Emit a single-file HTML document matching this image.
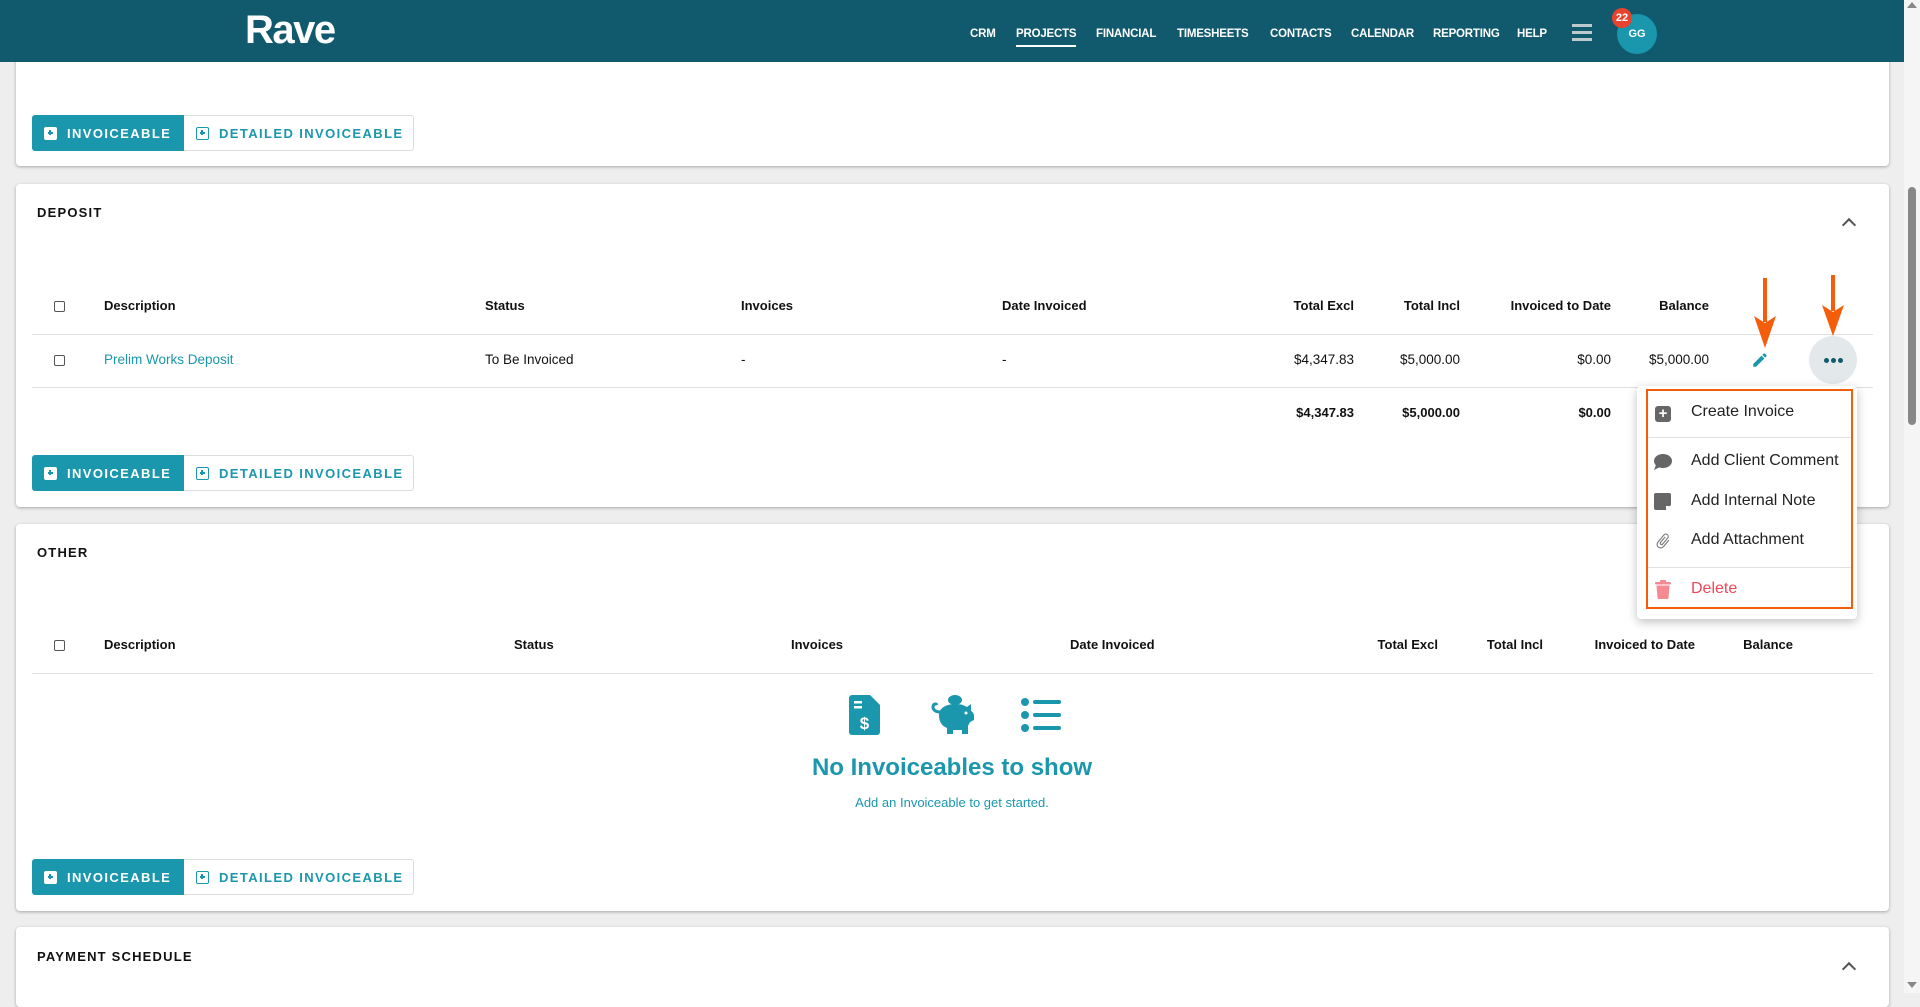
<!DOCTYPE html>
<html><head><meta charset="utf-8"><style>
*{box-sizing:border-box;margin:0;padding:0}
body{width:1920px;height:993px;overflow:hidden;background:#eeeeee;font-family:"Liberation Sans",sans-serif;color:#111;position:relative}
.a{position:absolute;white-space:nowrap}
.hdr{position:absolute;left:0;top:0;width:1904px;height:62px;background:#115a6e;z-index:5}
.z{z-index:6}
.nav{position:absolute;top:28px;font-size:11.5px;font-weight:bold;color:#fff;z-index:6;letter-spacing:-0.2px}
.card{position:absolute;left:16px;width:1873px;background:#fff;border-radius:4px;box-shadow:0 1px 3px rgba(0,0,0,.3)}
.btn1{position:absolute;height:36px;background:#1a97ad;color:#fff;font-size:13px;font-weight:bold;letter-spacing:1.4px;border-radius:3px 0 0 3px;display:flex;align-items:center;padding-left:12px;width:152px}
.btn2{position:absolute;height:36px;background:#fff;color:#1a97ad;font-size:13px;font-weight:bold;letter-spacing:1.4px;border:1px solid #ddd;border-left:none;border-radius:0 3px 3px 0;display:flex;align-items:center;padding-left:12px;width:230px}
.pl{display:inline-block;width:13px;height:13px;border:1.5px solid currentColor;border-radius:2px;margin-right:10px;position:relative}
.pl:before{content:"";position:absolute;left:2.5px;top:4.5px;width:5px;height:1.5px;background:currentColor}
.pl:after{content:"";position:absolute;left:4.25px;top:2.75px;width:1.5px;height:5px;background:currentColor}
.btn1 .pl{background:#fff;color:#1a97ad;border-color:#fff}
.ttl{position:absolute;font-size:13px;font-weight:bold;letter-spacing:1.2px}
.th{position:absolute;font-size:13px;font-weight:bold}
.td{position:absolute;font-size:13.5px}
.r{text-align:right}
.cb{position:absolute;width:11px;height:11px;border:1.5px solid #555;border-radius:2px}
.ln{position:absolute;height:1px;background:#e0e0e0}
.chev{position:absolute;width:10px;height:10px;border-left:2px solid #555;border-top:2px solid #555;transform:rotate(45deg)}
.mi{position:absolute;left:1691px;font-size:16px;color:#222}
</style></head><body>
<div class="hdr"></div>
<div class="a z" style="left:245px;top:8px;font-size:40px;font-weight:bold;color:#fff;letter-spacing:-1.5px">Rave</div>
<div class="nav" style="left:970px">CRM</div>
<div class="nav" style="left:1016px">PROJECTS</div>
<div class="a z" style="left:1016px;top:45px;width:60px;height:2px;background:#fff"></div>
<div class="nav" style="left:1096px">FINANCIAL</div>
<div class="nav" style="left:1177px">TIMESHEETS</div>
<div class="nav" style="left:1270px">CONTACTS</div>
<div class="nav" style="left:1351px">CALENDAR</div>
<div class="nav" style="left:1433px">REPORTING</div>
<div class="nav" style="left:1517px">HELP</div>
<div class="a z" style="left:1572px;top:24px;width:20px;height:3px;background:#bcc9cd;box-shadow:0 7px 0 #bcc9cd,0 14px 0 #bcc9cd"></div>
<div class="a z" style="left:1617px;top:14px;width:40px;height:40px;border-radius:50%;background:#1a97ad;color:#fff;font-size:11px;font-weight:bold;text-align:center;line-height:40px">GG</div>
<div class="a z" style="left:1612px;top:8px;width:20px;height:20px;border-radius:50%;background:#e8432f;color:#fff;font-size:11px;font-weight:bold;text-align:center;line-height:20px">22</div>
<div class="a" style="left:1904px;top:0;width:16px;height:993px;background:#f5f5f5"></div>
<div class="a" style="left:1908px;top:187px;width:8px;height:238px;background:#888;border-radius:4px"></div>
<div class="a" style="left:1907px;top:2px;width:0;height:0;border-left:5px solid transparent;border-right:5px solid transparent;border-bottom:6px solid #888"></div>
<div class="a" style="left:1907px;top:982px;width:0;height:0;border-left:5px solid transparent;border-right:5px solid transparent;border-top:6px solid #888"></div>

<div class="card" style="top:40px;height:126px"></div>
<div class="btn1" style="left:32px;top:115px"><span class="pl"></span>INVOICEABLE</div>
<div class="btn2" style="left:184px;top:115px"><span class="pl"></span>DETAILED INVOICEABLE</div>

<div class="card" style="top:184px;height:323px"></div>
<div class="ttl" style="left:37px;top:205px">DEPOSIT</div>
<div class="chev" style="left:1844px;top:220px"></div>
<div class="cb" style="left:54px;top:301px"></div>
<div class="th" style="left:104px;top:298px">Description</div>
<div class="th" style="left:485px;top:298px">Status</div>
<div class="th" style="left:741px;top:298px">Invoices</div>
<div class="th" style="left:1002px;top:298px">Date Invoiced</div>
<div class="th r" style="left:1254px;width:100px;top:298px">Total Excl</div>
<div class="th r" style="left:1360px;width:100px;top:298px">Total Incl</div>
<div class="th r" style="left:1471px;width:140px;top:298px">Invoiced to Date</div>
<div class="th r" style="left:1609px;width:100px;top:298px">Balance</div>
<div class="ln" style="left:32px;width:1841px;top:334px"></div>
<div class="cb" style="left:54px;top:355px"></div>
<div class="td" style="left:104px;top:352px;color:#1a97ad">Prelim Works Deposit</div>
<div class="td" style="left:485px;top:352px">To Be Invoiced</div>
<div class="td" style="left:741px;top:352px">-</div>
<div class="td" style="left:1002px;top:352px">-</div>
<div class="td r" style="left:1254px;width:100px;top:352px">$4,347.83</div>
<div class="td r" style="left:1360px;width:100px;top:352px">$5,000.00</div>
<div class="td r" style="left:1511px;width:100px;top:352px">$0.00</div>
<div class="td r" style="left:1609px;width:100px;top:352px">$5,000.00</div>
<svg class="a" style="left:1751px;top:351px" width="18" height="18" viewBox="0 0 24 24"><path d="M3 17.25V21h3.75L17.8 9.94l-3.75-3.75L3 17.25zM20.7 7.04a1 1 0 0 0 0-1.41l-2.34-2.34a1 1 0 0 0-1.41 0l-1.830 1.83 3.75 3.75 1.83-1.83z" fill="#1a97ad"/></svg>
<div class="a" style="left:1809px;top:336px;width:48px;height:48px;border-radius:50%;background:#e3e9eb"></div>
<div class="a" style="left:1824px;top:358px;width:5px;height:5px;border-radius:50%;background:#115a6e;box-shadow:7px 0 0 #115a6e,14px 0 0 #115a6e"></div>
<div class="ln" style="left:32px;width:1841px;top:387px"></div>
<div class="th r" style="left:1254px;width:100px;top:405px">$4,347.83</div>
<div class="th r" style="left:1360px;width:100px;top:405px">$5,000.00</div>
<div class="th r" style="left:1511px;width:100px;top:405px">$0.00</div>
<div class="btn1" style="left:32px;top:455px"><span class="pl"></span>INVOICEABLE</div>
<div class="btn2" style="left:184px;top:455px"><span class="pl"></span>DETAILED INVOICEABLE</div>

<div class="card" style="top:524px;height:387px"></div>
<div class="ttl" style="left:37px;top:545px">OTHER</div>
<div class="cb" style="left:54px;top:640px"></div>
<div class="th" style="left:104px;top:637px">Description</div>
<div class="th" style="left:514px;top:637px">Status</div>
<div class="th" style="left:791px;top:637px">Invoices</div>
<div class="th" style="left:1070px;top:637px">Date Invoiced</div>
<div class="th r" style="left:1338px;width:100px;top:637px">Total Excl</div>
<div class="th r" style="left:1443px;width:100px;top:637px">Total Incl</div>
<div class="th r" style="left:1555px;width:140px;top:637px">Invoiced to Date</div>
<div class="th r" style="left:1693px;width:100px;top:637px">Balance</div>
<div class="ln" style="left:32px;width:1841px;top:673px"></div>
<svg class="a" style="left:849px;top:695px" width="32" height="40" viewBox="0 0 32 40"><path d="M3 0h18l10 10v27a3 3 0 0 1-3 3H3a3 3 0 0 1-3-3V3a3 3 0 0 1 3-3z" fill="#1a97ad"/><path d="M22 0l9 9v-9z" fill="#fff"/><rect x="5" y="6" width="8" height="2.5" fill="#fff"/><rect x="5" y="11" width="8" height="2.5" fill="#fff"/><text x="15.5" y="34" font-family="Liberation Sans" font-weight="bold" font-size="17" fill="#fff" text-anchor="middle">$</text></svg>
<svg class="a" style="left:929px;top:695px" width="48" height="40" viewBox="0 0 48 40"><ellipse cx="26" cy="5" rx="7" ry="5" fill="#1a97ad"/><path d="M10 20c0-7 7-11 17-11 6 0 9 2 11 3l4-3v7c2 1 3 3 3 5v4l-4 2-2 4v8h-6v-4h-9v4h-6v-6c-5-2-8-6-8-13z" fill="#1a97ad"/><path d="M11 17c-4 0-7-2-7-5s3-4 4-2" stroke="#1a97ad" stroke-width="3" fill="none"/><circle cx="37" cy="18" r="1.5" fill="#fff"/></svg>
<svg class="a" style="left:1021px;top:697px" width="40" height="36" viewBox="0 0 40 36"><circle cx="4" cy="5" r="4" fill="#1a97ad"/><circle cx="4" cy="18" r="4" fill="#1a97ad"/><circle cx="4" cy="31" r="4" fill="#1a97ad"/><rect x="12" y="3" width="28" height="4" rx="2" fill="#1a97ad"/><rect x="12" y="16" width="28" height="4" rx="2" fill="#1a97ad"/><rect x="12" y="29" width="28" height="4" rx="2" fill="#1a97ad"/></svg>
<div class="a" style="left:752px;width:400px;text-align:center;top:754px;font-size:24px;font-weight:bold;color:#1a97ad">No Invoiceables to show</div>
<div class="a" style="left:752px;width:400px;text-align:center;top:795px;font-size:13px;color:#1a97ad">Add an Invoiceable to get started.</div>
<div class="btn1" style="left:32px;top:859px"><span class="pl"></span>INVOICEABLE</div>
<div class="btn2" style="left:184px;top:859px"><span class="pl"></span>DETAILED INVOICEABLE</div>

<div class="card" style="top:927px;height:80px"></div>
<div class="ttl" style="left:37px;top:949px">PAYMENT SCHEDULE</div>
<div class="chev" style="left:1844px;top:964px"></div>

<div class="a" style="left:1637px;top:386px;width:220px;height:233px;background:#fff;border-radius:4px;box-shadow:0 3px 10px rgba(0,0,0,.25)"></div>
<div class="a" style="left:1646px;top:389px;width:207px;height:220px;border:2px solid #f45d0a"></div>
<div class="ln" style="left:1648px;width:203px;top:437px"></div>
<div class="ln" style="left:1648px;width:203px;top:567px"></div>
<div class="a" style="left:1655px;top:406px;width:16px;height:16px;background:#666;border-radius:3px;color:#fff;font-size:15px;font-weight:bold;text-align:center;line-height:16px">+</div>
<div class="mi" style="top:403px">Create Invoice</div>
<svg class="a" style="left:1653px;top:453px" width="19" height="18" viewBox="0 0 19 18"><ellipse cx="10" cy="8" rx="9" ry="7" fill="#666"/><path d="M3 12l-2 5 6-3z" fill="#666"/></svg>
<div class="mi" style="top:452px">Add Client Comment</div>
<svg class="a" style="left:1654px;top:493px" width="17" height="17" viewBox="0 0 17 17"><path d="M2 0h13a2 2 0 0 1 2 2v10l-5 5H2a2 2 0 0 1-2-2V2a2 2 0 0 1 2-2z" fill="#666"/><path d="M12 17v-4h4z" fill="#fff"/></svg>
<div class="mi" style="top:492px">Add Internal Note</div>
<svg class="a" style="left:1654px;top:531px" width="18" height="20" viewBox="0 0 24 24"><path d="M16.5 6v11.5a4 4 0 0 1-8 0V5a2.5 2.5 0 0 1 5 0v10.5a1 1 0 0 1-2 0V6H10v9.5a2.5 2.5 0 0 0 5 0V5a4 4 0 0 0-8 0v12.5a5.5 5.5 0 0 0 11 0V6h-1.5z" fill="#777" transform="rotate(40 12 12)"/></svg>
<div class="mi" style="top:531px">Add Attachment</div>
<svg class="a" style="left:1655px;top:580px" width="16" height="19" viewBox="0 0 16 19"><rect x="0" y="2" width="16" height="2.5" rx="1" fill="#f58a93"/><rect x="5" y="0" width="6" height="3" rx="1" fill="#f58a93"/><path d="M1.5 5.5h13l-1 12.5a1 1 0 0 1-1 1h-9a1 1 0 0 1-1-1z" fill="#f58a93"/></svg>
<div class="mi" style="top:580px;color:#f0475a">Delete</div>

<svg class="a" style="left:1753px;top:278px" width="24" height="72" viewBox="0 0 24 72"><path d="M10 0h4v44h-4z" fill="#f45d0a"/><path d="M1 38l11 32 11-32-11 7z" fill="#f45d0a"/></svg>
<svg class="a" style="left:1821px;top:275px" width="24" height="62" viewBox="0 0 24 62"><path d="M10 0h4v36h-4z" fill="#f45d0a"/><path d="M1 30l11 31 11-31-11 7z" fill="#f45d0a"/></svg>
</body></html>
